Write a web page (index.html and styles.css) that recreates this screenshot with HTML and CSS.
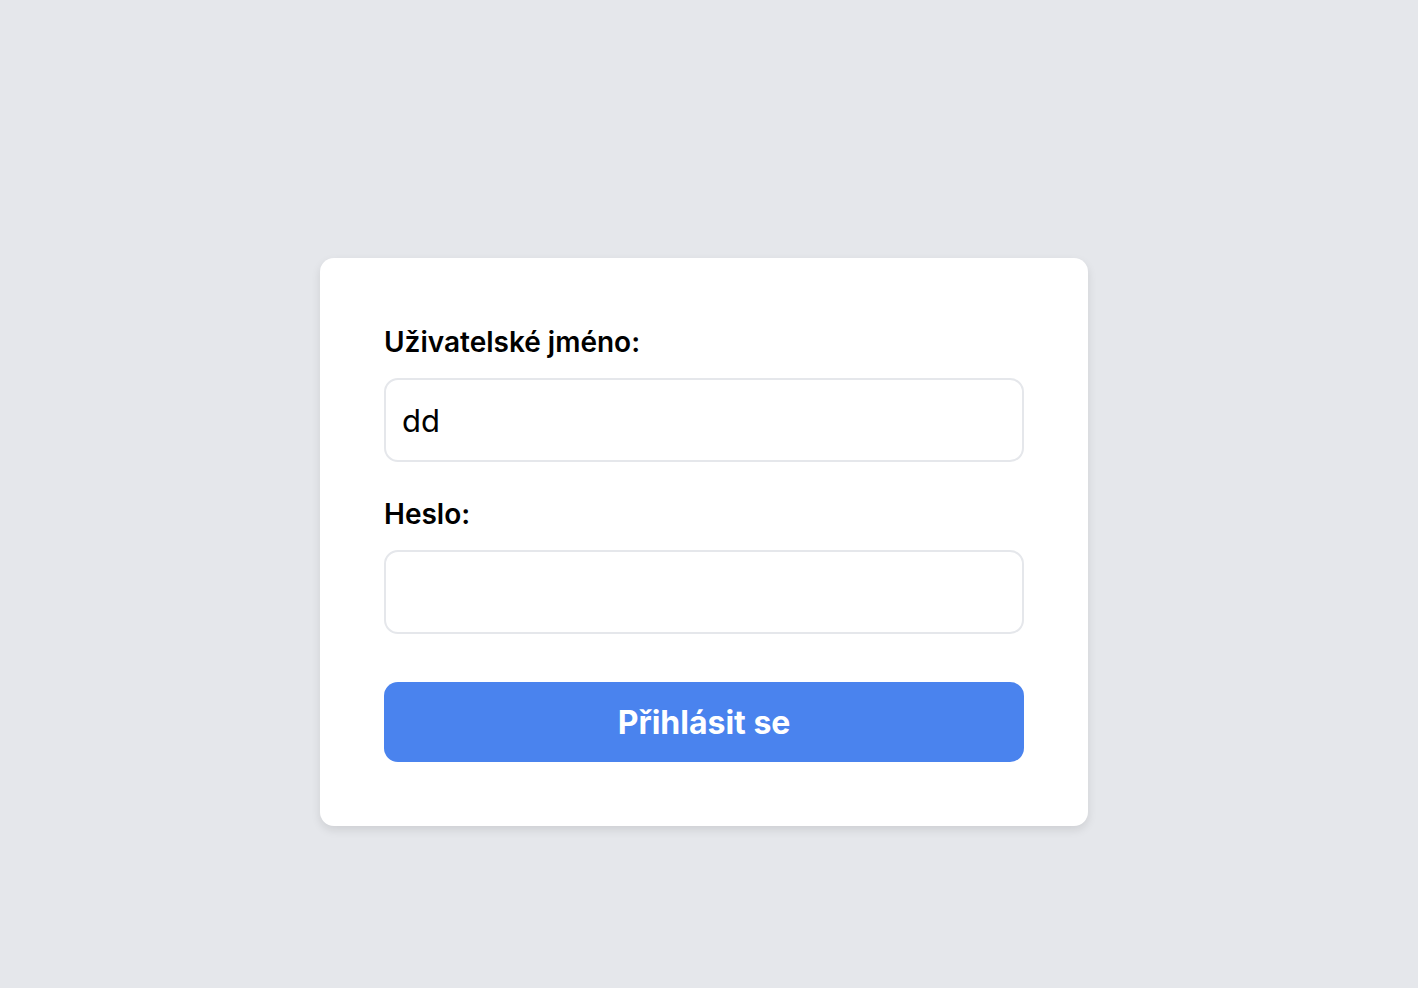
FILE: index.html
```html
<!DOCTYPE html>
<html lang="cs">
<head>
<meta charset="utf-8">
<title>Přihlášení</title>
<link rel="stylesheet" href="styles.css">
</head>
<body>
<main class="page">
  <form class="card">
    <label class="label" for="user">Uživatelské jméno:</label>
    <input class="field" id="user" type="text" value="dd">
    <label class="label label-gap" for="pass">Heslo:</label>
    <input class="field" id="pass" type="password">
    <button class="btn" type="button">Přihlásit se</button>
  </form>
</main>
</body>
</html>
```
FILE: styles.css
```css
html, body {
  margin: 0;
  padding: 0;
  background: #e5e7eb;
  font-family: Inter, "Noto Sans", sans-serif;
}
.page {
  display: flex;
  justify-content: flex-start;
  align-items: flex-start;
  padding: 258px 0 0 320px;
  min-height: 988px;
  box-sizing: border-box;
}
.card {
  width: 768px;
  box-sizing: border-box;
  background: #fff;
  border-radius: 14px;
  padding: 64px;
  display: flex;
  flex-direction: column;
  box-shadow: 0 4px 10px rgba(0, 0, 0, 0.1);
}
.label {
  font-size: 28px;
  font-weight: 600;
  line-height: 40px;
  color: #000;
  margin-bottom: 16px;
}
.label-gap {
  margin-top: 32px;
}
.field {
  height: 84px;
  box-sizing: border-box;
  border: 2px solid #e5e7eb;
  border-radius: 14px;
  padding: 0 16px;
  font-family: Inter, "Noto Sans", sans-serif;
  font-size: 31px;
  color: #000;
  outline: none;
  background: #fff;
}
.btn {
  margin-top: 48px;
  height: 80px;
  border: none;
  border-radius: 14px;
  background: #4a83ee;
  color: #fff;
  font-family: Inter, "Noto Sans", sans-serif;
  font-size: 32px;
  font-weight: 700;
  cursor: pointer;
}
```
